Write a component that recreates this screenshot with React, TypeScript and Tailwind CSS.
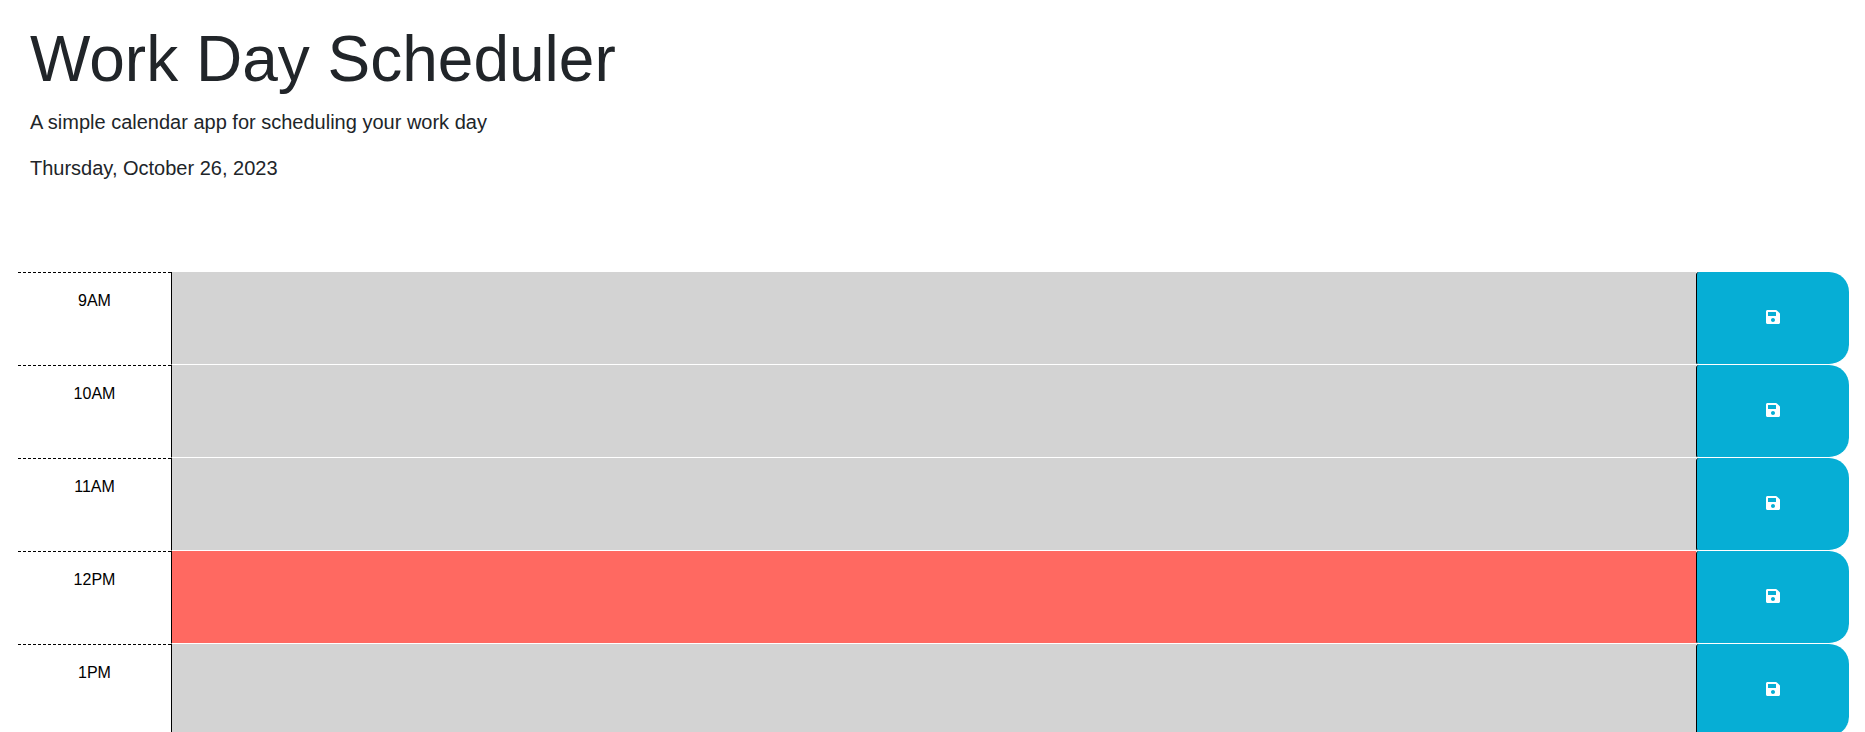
import { FaSave } from "react-icons/fa";

const rows = [
  { hour: "9AM", bg: "bg-[#d3d3d3]" },
  { hour: "10AM", bg: "bg-[#d3d3d3]" },
  { hour: "11AM", bg: "bg-[#d3d3d3]" },
  { hour: "12PM", bg: "bg-[#ff6961]" },
  { hour: "1PM", bg: "bg-[#d3d3d3]" },
];

export default function App() {
  return (
    <div className="h-[732px] overflow-hidden bg-white text-[#212529] font-['Liberation_Sans',Arial,sans-serif]">
      <header className="pl-[30px] pt-[21px] h-[272px]">
        <h1 className="text-[64px] leading-[77px] font-light m-0 tracking-normal">Work Day Scheduler</h1>
        <p className="text-[20px] leading-[30px] font-light mt-[9px]">A simple calendar app for scheduling your work day</p>
        <p className="text-[20px] leading-[30px] font-light mt-[16px]">Thursday, October 26, 2023</p>
      </header>
      <div className="pl-[18px] pr-[16px]">
        {rows.map((r) => (
          <div key={r.hour} className="flex h-[93px]">
            <div className="w-[153px] shrink-0 border-t border-dashed border-black text-center text-[16px] leading-[24px] pt-[16px] text-black">
              {r.hour}
            </div>
            <textarea
              aria-label={r.hour}
              className={`flex-1 min-w-0 resize-none ${r.bg} border-l border-black border-b border-b-white outline-none`}
            />
            <button className="w-[153px] shrink-0 flex items-center justify-center bg-[#06aed5] text-white rounded-tl-[3px] rounded-bl-[3px] rounded-tr-[20px] rounded-br-[20px] border-b border-b-white border-l border-l-black pb-[2px]">
              <FaSave className="w-[16px] h-[16px]" />
            </button>
          </div>
        ))}
      </div>
    </div>
  );
}
